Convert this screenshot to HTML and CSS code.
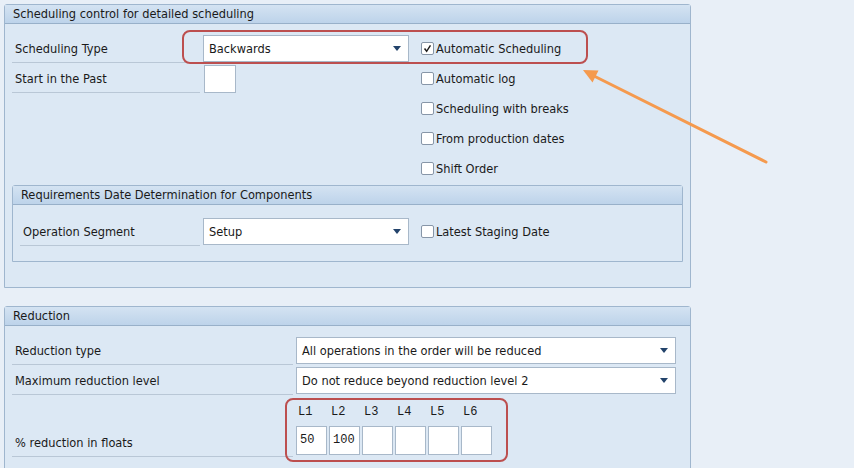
FILE: index.html
```html
<!DOCTYPE html>
<html lang="en">
<head>
    <meta charset="UTF-8">
    <title>Scheduling control</title>
    <link rel="stylesheet" href="styles.css">
</head>
<body>
<div class="screen">

    <section class="group group-main">
        <div class="group-head">Scheduling control for detailed scheduling</div>
        <div class="group-body">
            <div class="form-grid">
                <div class="lbl">Scheduling Type</div>
                <div class="cell"><div class="combo">Backwards<span class="caret"></span></div></div>
                <div class="cell"><label class="chk"><span class="box"><svg viewBox="0 0 13 13"><path d="M3 6.5 L5.5 9.8 L10 2.8"/></svg></span>Automatic Scheduling</label></div>

                <div class="lbl">Start in the Past</div>
                <div class="cell"><div class="field short"></div></div>
                <div class="cell"><label class="chk"><span class="box"></span>Automatic log</label></div>

                <div></div><div></div>
                <div class="cell"><label class="chk"><span class="box"></span>Scheduling with breaks</label></div>

                <div></div><div></div>
                <div class="cell"><label class="chk"><span class="box"></span>From production dates</label></div>

                <div></div><div></div>
                <div class="cell"><label class="chk"><span class="box"></span>Shift Order</label></div>
            </div>

            <section class="group group-inner">
                <div class="group-head">Requirements Date Determination for Components</div>
                <div class="group-body">
                    <div class="form-grid inner-grid">
                        <div class="lbl">Operation Segment</div>
                        <div class="cell"><div class="combo">Setup<span class="caret"></span></div></div>
                        <div class="cell"><label class="chk"><span class="box"></span>Latest Staging Date</label></div>
                    </div>
                </div>
            </section>
        </div>
    </section>

    <section class="group group-reduction">
        <div class="group-head">Reduction</div>
        <div class="group-body">
            <div class="reduce-grid">
                <div class="lbl">Reduction type</div>
                <div class="cell"><div class="combo wide">All operations in the order will be reduced<span class="caret"></span></div></div>

                <div class="lbl">Maximum reduction level</div>
                <div class="cell"><div class="combo wide">Do not reduce beyond reduction level 2<span class="caret"></span></div></div>

                <div class="lbl lbl-low">% reduction in floats</div>
                <div class="levels">
                    <div class="level-row">
                        <span class="lvl">L1</span><span class="lvl">L2</span><span class="lvl">L3</span>
                        <span class="lvl">L4</span><span class="lvl">L5</span><span class="lvl">L6</span>
                    </div>
                    <div class="level-row">
                        <div class="num">50</div><div class="num">100</div><div class="num"></div>
                        <div class="num"></div><div class="num"></div><div class="num"></div>
                    </div>
                </div>
            </div>
        </div>
    </section>

    <!-- annotations drawn on top of the screenshot -->
    <div class="mark mark-top"></div>
    <div class="mark mark-levels"></div>
    <svg class="arrow" width="854" height="468" viewBox="0 0 854 468">
        <line x1="766" y1="162" x2="594" y2="76"/>
        <polygon points="583,70 598.5,70.5 592.5,82.5"/>
    </svg>
</div>
</body>
</html>
```

FILE: styles.css
```css
body {
    margin: 0;
    background-color: #e8eff7;
    font-family: 'DejaVu Sans Condensed', 'Liberation Sans', sans-serif;
    font-size: 12.7px;
    color: #1a1a1a;
}

.screen {
    position: relative;
    width: 854px;
    height: 468px;
    overflow: hidden;
    padding-top: 4px;
    box-sizing: border-box;
}

.group {
    border: 1px solid #9fb6ce;
    border-radius: 3px 3px 0 0;
    background-color: #dce8f4;
}

.group-main {
    margin-left: 4px;
    width: 685px;
    height: 282px;
}

.group-reduction {
    margin: 18px 0 0 4px;
    width: 685px;
    height: 200px;
}

.group-head {
    height: 18px;
    line-height: 18px;
    padding-left: 8px;
    background: linear-gradient(#d4e3f2, #bdd3ea);
    border-bottom: 1px solid #98b0c9;
    white-space: nowrap;
}

.group-body {
    padding: 9px 7px 0 7px;
}

.form-grid {
    display: grid;
    grid-template-columns: 191px 218px auto;
    grid-auto-rows: 30px;
}

.lbl {
    margin-right: 3px;
    padding: 2px 0 0 3px;
    box-sizing: border-box;
    border-bottom: 1px solid #b9c7d6;
    display: flex;
    align-items: center;
    white-space: nowrap;
}

.cell {
    display: flex;
    align-items: center;
}

.combo {
    position: relative;
    width: 206px;
    height: 27px;
    line-height: 25px;
    box-sizing: border-box;
    padding-left: 5px;
    background-color: #fff;
    border: 1px solid #a8b8c9;
    white-space: nowrap;
}

.combo.wide {
    width: 380px;
}

.caret {
    position: absolute;
    right: 7px;
    top: 10px;
    border-left: 4px solid transparent;
    border-right: 4px solid transparent;
    border-top: 5px solid #23436b;
}

.field {
    background-color: #fff;
    border: 1px solid #a8b8c9;
    box-sizing: border-box;
}

.field.short {
    width: 32px;
    height: 28px;
    margin: 2px 0 0 1px;
}

.chk {
    display: flex;
    align-items: center;
    white-space: nowrap;
}

.box {
    width: 13px;
    height: 13px;
    box-sizing: border-box;
    margin-right: 2px;
    background-color: #fff;
    border: 1px solid #8796a8;
    border-radius: 2px;
    display: flex;
}

.box svg {
    width: 11px;
    height: 11px;
    fill: none;
    stroke: #1b1b1b;
    stroke-width: 1.7;
}

.group-inner {
    margin: 2px 0 0 0;
    border-radius: 3px 3px 0 0;
}

.group-inner .group-body {
    padding: 11px 7px 15px 7px;
}

.inner-grid {
    grid-template-columns: 183px 218px auto;
}

.reduce-grid {
    display: grid;
    grid-template-columns: 284px 380px;
    grid-template-rows: 30px 30px 62px;
}

.lbl-low {
    align-self: end;
    height: 30px;
}

.levels {
    display: flex;
    flex-direction: column;
    padding-top: 4px;
}

.level-row {
    display: flex;
    gap: 2px;
}

.lvl {
    width: 31px;
    height: 27px;
    line-height: 27px;
    padding-left: 2px;
    box-sizing: border-box;
    font-family: 'Liberation Mono', monospace;
    font-size: 12px;
}

.num {
    width: 31px;
    height: 29px;
    line-height: 27px;
    padding-left: 3px;
    box-sizing: border-box;
    background-color: #fff;
    border: 1px solid #a8b8c9;
    font-family: 'Liberation Mono', monospace;
    font-size: 12px;
}

.mark {
    position: absolute;
    border: 2px solid #bc4f4f;
    border-radius: 8px;
}

.mark-top {
    left: 182px;
    top: 30px;
    width: 402px;
    height: 30px;
}

.mark-levels {
    left: 285px;
    top: 398px;
    width: 219px;
    height: 60px;
}

.arrow {
    position: absolute;
    left: 0;
    top: 0;
}

.arrow line {
    stroke: #f59a4e;
    stroke-width: 3;
    stroke-linecap: round;
}

.arrow polygon {
    fill: #f59a4e;
}
```
